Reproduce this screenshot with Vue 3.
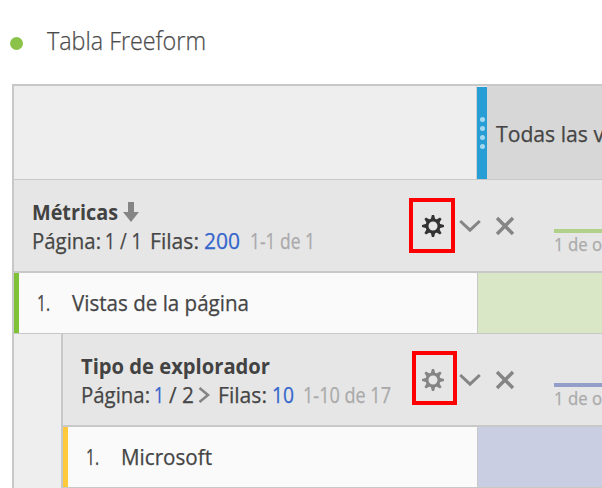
<script setup>
import { h } from 'vue'

// Text condensed to a given width; the baseline sits 22px below the top of its box.
const Fit = (props) =>
  h('svg', { width: props.w, height: 29, class: 'fit' }, [
    h('text', { x: 0, y: 22, textLength: props.w, lengthAdjust: 'spacingAndGlyphs' }, props.text),
  ])
Fit.props = ['text', 'w']

const gearTeeth = [0, 45, 90, 135, 180, 225, 270, 315]
const sections = [
  {
    id: 'metrics',
    title: ['Métricas', 86],
    sort: true,
    page: ['1', 10],
    total: ['/ 1', 22],
    rows: ['200', 36],
    range: ['1-1 de 1', 65],
    item: ['Vistas de la página', 177],
  },
  {
    id: 'browser',
    title: ['Tipo de explorador', 189],
    link: true,
    next: true,
    page: ['1', 10],
    total: ['/ 2', 25],
    rows: ['10', 22],
    range: ['1-10 de 17', 88],
    item: ['Microsoft', 91],
  },
]
</script>

<template>
  <main class="page">
    <header class="title"><i class="bullet"></i><Fit text="Tabla Freeform" :w="159" /></header>
    <section class="table">
      <div class="head">
        <div class="blank"></div>
        <div class="handle"><i v-for="n in 4" :key="n"></i></div>
        <div class="segment"><Fit text="Todas las v" :w="108" /></div>
      </div>
      <div v-for="s in sections" :key="s.id" class="group" :class="s.id">
        <div class="bar">
          <div class="info">
            <div class="name">
              <Fit :text="s.title[0]" :w="s.title[1]" />
              <svg v-if="s.sort" class="sort" width="16" height="20" viewBox="0 0 16 20">
                <path d="M5 0h6v10h5L8 20 0 10h5z" />
              </svg>
            </div>
            <div class="paging">
              <Fit text="Página:" :w="69" />
              <Fit class="page-no" :class="{ blue: s.link }" :text="s.page[0]" :w="s.page[1]" />
              <Fit class="total" :text="s.total[0]" :w="s.total[1]" />
              <svg v-if="s.next" class="next" width="12" height="18" viewBox="0 0 12 18">
                <path d="M1.5 2l8.5 7-8.5 7" />
              </svg>
              <Fit class="rows" text="Filas:" :w="49" />
              <Fit class="count blue" :text="s.rows[0]" :w="s.rows[1]" />
              <Fit class="range" :text="s.range[0]" :w="s.range[1]" />
            </div>
          </div>
          <div class="tools">
            <span class="mark"></span>
            <svg class="gear" width="24" height="24" viewBox="-12 -12 24 24">
              <circle r="6" />
              <path v-for="a in gearTeeth" :key="a" d="M-2.3-6.5L-1.1-11H1.1L2.3-6.5z" :transform="`rotate(${a})`" />
            </svg>
            <svg class="chevron" width="22" height="14" viewBox="0 0 22 14">
              <path d="M1.2 2L11 11.2 20.8 2" />
            </svg>
            <svg class="close" width="20" height="20" viewBox="0 0 20 20">
              <path d="M2 2l16 16M18 2L2 18" />
            </svg>
          </div>
          <div class="trend"><Fit text="1 de o" :w="48" /></div>
        </div>
        <div class="row">
          <div class="item">
            <Fit text="1." :w="13" />
            <Fit :text="s.item[0]" :w="s.item[1]" />
          </div>
          <div class="cell"></div>
        </div>
      </div>
    </section>
  </main>
</template>

<style>
body { background: #fff; }
.fit { display: block; flex: none; overflow: visible; fill: currentColor; stroke: currentColor; stroke-width: 0.25; }
</style>

<style scoped>
.page {
  box-sizing: border-box;
  width: 602px;
  height: 488px;
  overflow: hidden;
  padding-left: 12px;
  color: #454545;
  font: 22px "Open Sans", "Noto Sans", sans-serif;
}
.title {
  display: flex;
  height: 84px;
  box-sizing: border-box;
  padding-top: 28px;
  font-size: 26px;
  font-weight: 300;
  color: #4b4b4b;
}
.bullet { width: 13px; height: 13px; margin: 9px 24px 0 -2px; border-radius: 50%; background: #8bc34a; }
.table { width: 590px; box-sizing: border-box; border: solid #c8c8c8; border-width: 2px 0 0 2px; background: #eee; }
.head { display: flex; height: 94px; box-sizing: border-box; border-bottom: 1px solid #c8c8c8; }
.blank { width: 462px; border-right: 1px solid #d0d0d0; }
.handle {
  display: flex;
  flex-direction: column;
  align-items: center;
  gap: 4px;
  width: 10px;
  box-sizing: border-box;
  margin-top: 1px;
  padding-top: 30px;
  background: #269dd5;
}
.handle i { width: 5px; height: 5px; border-radius: 50%; background: #a4d8f0; }
.segment { flex: 1; min-width: 0; padding: 34px 0 0 9px; background: #d7d7d7; }
.group { width: 588px; box-sizing: border-box; }
.browser { padding-left: 47px; }
.browser .bar, .browser .row { border-left: 2px solid #c8c8c8; }
.bar { display: flex; height: 93px; box-sizing: border-box; border-bottom: 2px solid #c8c8c8; background: #e6e6e6; }
.info { width: 395px; box-sizing: border-box; padding: 18px 0 0 18px; }
.browser .info { width: 349px; padding-left: 18px; }
.name { display: flex; font-weight: 700; color: #424242; }
.name .fit { stroke: none; }
.sort { margin: 4px 0 0 5px; fill: #858585; }
.paging { display: flex; }
.page-no { margin-left: 4px; }
.total { margin-left: 5px; }
.rows { margin-left: 8px; }
.count { margin-left: 5px; }
.range { margin-left: 10px; color: #aaa; }
.blue { color: #3465cc; }
.next { margin: 5px 0 0 4px; fill: none; stroke: #858585; stroke-width: 2.6; }
.browser .page-no { margin-left: 4px; }
.browser .rows { margin-left: 8px; }
.browser .range { margin-left: 9px; }
.tools { position: relative; display: flex; width: 145px; box-sizing: border-box; padding-left: 12px; flex: none; color: #858585; }
.browser .tools { width: 142px; padding-left: 9px; }
.mark { position: absolute; left: 0; top: 18px; width: 46px; height: 55px; box-sizing: border-box; border: 4px solid #f00; }
.browser .mark { top: 17px; width: 45px; height: 54px; }
.gear { margin-top: 34px; fill: currentColor; }
.metrics .gear { color: #333; }
.gear circle { fill: none; stroke: currentColor; stroke-width: 3; }
.chevron { margin: 39px 0 0 14px; fill: none; stroke: currentColor; stroke-width: 3; }
.close { margin: 36px 0 0 14px; fill: none; stroke: currentColor; stroke-width: 3.4; }
.trend { flex: 1; min-width: 0; height: 32px; margin-top: 49px; border-top: 4px solid #b1d18b; font-size: 18px; color: #aaa; }
.trend .fit { margin-top: -4px; }
.browser .trend { border-color: #949fc9; }
.row { display: flex; height: 61px; box-sizing: border-box; border-bottom: 1px solid #c8c8c8; }
.item {
  display: flex;
  gap: 22px;
  width: 464px;
  box-sizing: border-box;
  padding: 16px 0 0 18px;
  border-left: 5px solid #7fc238;
  border-right: 1px solid #c8c8c8;
  background: #fafafa;
}
.browser .item { width: 415px; border-left-color: #ffc93c; }
.cell { flex: 1; background: #d9e7c7; }
.browser .cell { background: #c9cee2; }
</style>
